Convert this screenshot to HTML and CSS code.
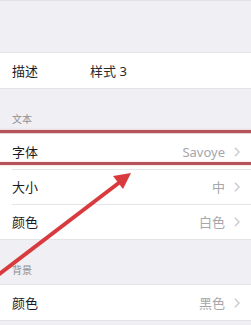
FILE: index.html
```html
<!doctype html>
<html lang="zh">
  <head>
    <meta charset="UTF-8" />
    <meta name="viewport" content="width=device-width, initial-scale=1.0" />
    <title>文本设置</title>
    <link rel="stylesheet" href="styles.css">
  </head>
  <body>
    <div class="page">
      <div class="top-space"></div>

      <div class="group">
        <div class="row">
          <span class="label">描述</span>
          <span class="desc">样式 3</span>
        </div>
      </div>

      <div class="section-head">文本</div>
      <div class="group">
        <div class="row">
          <span class="label">字体</span>
          <span class="value">Savoye</span>
          <svg class="chev" viewBox="0 0 7 12" aria-hidden="true"><path d="M1 1l5 5-5 5" /></svg>
        </div>
        <div class="row">
          <span class="label">大小</span>
          <span class="value">中</span>
          <svg class="chev" viewBox="0 0 7 12" aria-hidden="true"><path d="M1 1l5 5-5 5" /></svg>
        </div>
        <div class="row">
          <span class="label">颜色</span>
          <span class="value">白色</span>
          <svg class="chev" viewBox="0 0 7 12" aria-hidden="true"><path d="M1 1l5 5-5 5" /></svg>
        </div>
      </div>

      <div class="section-head">背景</div>
      <div class="group">
        <div class="row">
          <span class="label">颜色</span>
          <span class="value">黑色</span>
          <svg class="chev" viewBox="0 0 7 12" aria-hidden="true"><path d="M1 1l5 5-5 5" /></svg>
        </div>
      </div>

      <!-- annotation overlay -->
      <div class="highlight"></div>
      <svg class="arrow" viewBox="0 0 251 325" aria-hidden="true">
        <line x1="-6" y1="277" x2="120" y2="181" />
        <polygon points="131,172 123,188 113,175" />
      </svg>
    </div>
  </body>
</html>
```

FILE: styles.css
```css
* {
  box-sizing: border-box;
}

body {
  margin: 0;
  padding: 0;
  background: #efeff4;
  font-family: "Noto Sans", "Noto Sans CJK SC", sans-serif;
  color: #1c1c1e;
  overflow: hidden;
}

.page {
  position: relative;
  width: 251px;
  height: 325px;
  border-top: 1px solid #e2e2e6;
}

.top-space {
  height: 51px;
}

.group {
  background: #fff;
  border-top: 1px solid #e4e4e8;
  border-bottom: 1px solid #e4e4e8;
}

.row {
  position: relative;
  height: 35px;
  display: flex;
  align-items: center;
  padding: 0 11px 0 12px;
  font-size: 13px;
}

.row + .row::before {
  content: "";
  position: absolute;
  top: 0;
  left: 12px;
  right: 0;
  border-top: 1px solid #e6e6ea;
}

.label {
  width: 78px;
}

.desc {
  color: #2a2a2c;
}

.value {
  margin-left: auto;
  color: #a6a6ab;
}

.chev {
  width: 6px;
  height: 10px;
  margin-left: 9px;
  fill: none;
  stroke: #c9c9ce;
  stroke-width: 1.6;
}

.section-head {
  height: 44px;
  display: flex;
  align-items: flex-end;
  padding: 0 12px 7px;
  font-size: 10px;
  color: #8e8e93;
}

.highlight {
  position: absolute;
  left: -4px;
  right: -4px;
  top: 129px;
  height: 35px;
  border-top: 3px solid #b5525a;
  border-bottom: 3px solid #b5525a;
  box-shadow: 0 0 2px rgba(230, 150, 150, 0.6), inset 0 0 2px rgba(230, 150, 150, 0.6);
  pointer-events: none;
}

.arrow {
  position: absolute;
  left: 0;
  top: 0;
  width: 251px;
  height: 325px;
  pointer-events: none;
}

.arrow line {
  stroke: #d83a3d;
  stroke-width: 4;
}

.arrow polygon {
  fill: #d83a3d;
}
```
